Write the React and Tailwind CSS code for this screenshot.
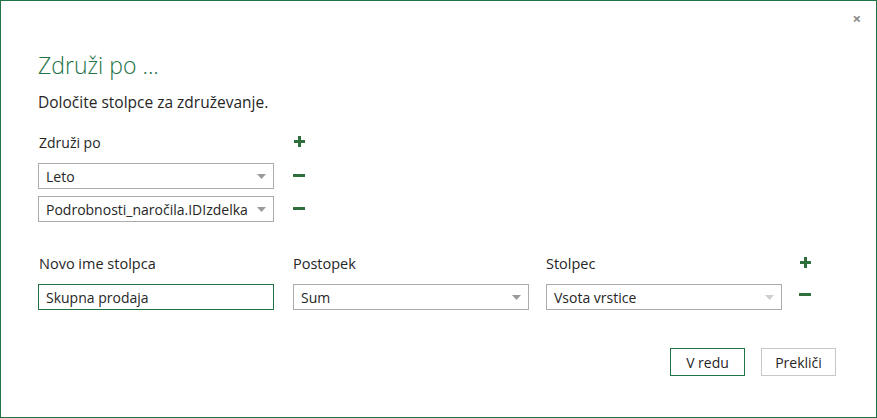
import React from "react";

const Arrow = ({ light }) => (
  <svg width="9" height="5" viewBox="0 0 9 5" className="shrink-0">
    <path d="M0 0h9L4.5 5z" fill={light ? "#cfcfcf" : "#9a9a9a"} />
  </svg>
);

const Select = ({ value, light }) => (
  <div className="flex h-[26px] w-[236px] items-center justify-between border border-[#ababab] bg-white pl-[7px] pr-[7px] text-[14px] text-[#262626]">
    <span className="truncate">{value}</span>
    <Arrow light={light} />
  </div>
);

const Plus = () => (
  <svg width="11" height="11" viewBox="0 0 11 11">
    <path d="M4 0h3v4h4v3H7v4H4V7H0V4h4z" fill="#2f6f3e" />
  </svg>
);

const Minus = () => (
  <svg width="12" height="3" viewBox="0 0 12 3">
    <rect width="12" height="3" fill="#2f6f3e" />
  </svg>
);

export default function App() {
  return (
    <div
      className="relative h-[418px] w-[877px] border border-[#217346] bg-white text-[#262626]"
      style={{ fontFamily: '"Open Sans", "Noto Sans", sans-serif' }}
    >
      <button className="absolute right-[15px] top-[10px] text-[15px] font-bold leading-none text-[#8a8a8a]">
        ×
      </button>

      <div className="pl-[37px] pt-[47px]">
        <h1 className="text-[23px] font-light leading-[34px] text-[#217346]">Združi po ...</h1>
        <p className="mt-[10px] text-[15.5px] leading-[20px]">Določite stolpce za združevanje.</p>

        <div className="mt-[21px] flex gap-[19px]">
          <div className="flex w-[236px] flex-col">
            <div className="h-[20px] pl-[1px] text-[14px] leading-[20px]">Združi po</div>
            <div className="mt-[10px] flex flex-col gap-[7px]">
              <Select value="Leto" />
              <Select value="Podrobnosti_naročila.IDIzdelka" />
            </div>
          </div>
          <div className="flex w-[12px] flex-col items-center">
            <div className="flex h-[16px] items-center">
              <Plus />
            </div>
            <div className="mt-[16px] flex h-[20px] items-center">
              <Minus />
            </div>
            <div className="mt-[13px] flex h-[20px] items-center">
              <Minus />
            </div>
          </div>
        </div>

        <div className="mt-[32px] flex">
          <div className="flex w-[255px] flex-col">
            <div className="h-[20px] pl-[1px] text-[14.5px] leading-[20px]">Novo ime stolpca</div>
            <div className="mt-[10px] flex h-[26px] w-[236px] items-center border border-[#217346] pl-[7px] text-[14px] text-[#262626]">
              Skupna prodaja
            </div>
          </div>
          <div className="flex w-[253px] flex-col">
            <div className="h-[20px] text-[14.5px] leading-[20px]">Postopek</div>
            <div className="mt-[10px]">
              <Select value="Sum" />
            </div>
          </div>
          <div className="flex w-[253px] flex-col">
            <div className="h-[20px] text-[14.5px] leading-[20px]">Stolpec</div>
            <div className="mt-[10px]">
              <Select value="Vsota vrstice" light />
            </div>
          </div>
          <div className="flex w-[12px] flex-col items-center">
            <div className="flex h-[16px] items-center">
              <Plus />
            </div>
            <div className="mt-[14px] flex h-[20px] items-center">
              <Minus />
            </div>
          </div>
        </div>
      </div>

      <div className="mt-[38px] flex justify-end gap-[16px] pr-[40px]">
        <button className="h-[28px] w-[75px] border border-[#217346] bg-white text-[14px] text-[#262626]">
          V redu
        </button>
        <button className="h-[28px] w-[75px] border border-[#c6c6c6] bg-white text-[14px] text-[#262626]">
          Prekliči
        </button>
      </div>
    </div>
  );
}
